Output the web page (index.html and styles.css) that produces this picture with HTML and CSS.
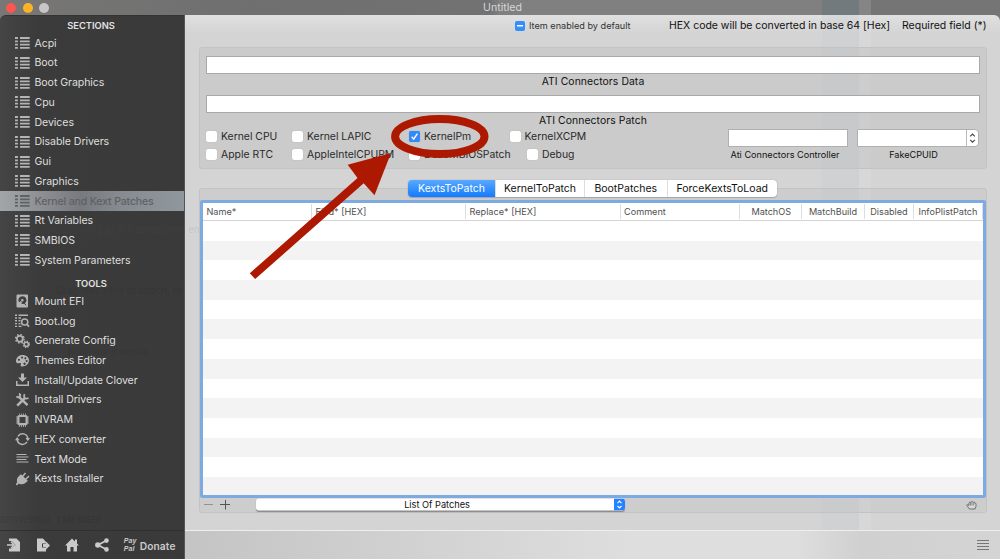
FILE: index.html
```html
<!DOCTYPE html>
<html lang="en">
<head>
<meta charset="utf-8">
<title>Untitled</title>
<link rel="stylesheet" href="styles.css">
</head>
<body>
<svg class="defs" aria-hidden="true">
  <symbol id="list" viewBox="0 0 15 14"><path d="M0 2h2.900M5 2h9.700M0 5.300h2.900M5 5.300h9.700M0 8.600h2.900M5 8.600h9.700M0 11.900h2.900M5 11.900h9.700" stroke="currentColor" stroke-width="1.800"/></symbol>
</svg>
<div class="window">
  <header class="titlebar">
    <div class="lights"><i class="red"></i><i class="amber"></i><i class="grey"></i></div>
    <span class="title">Untitled</span>
  </header>
  <div class="body">
    <aside class="sidebar">
      <h2 class="heading">SECTIONS</h2>
      <nav class="menu">
        <a class="item"><svg class="icon"><use href="#list"/></svg><span>Acpi</span></a>
        <a class="item"><svg class="icon"><use href="#list"/></svg><span>Boot</span></a>
        <a class="item"><svg class="icon"><use href="#list"/></svg><span>Boot Graphics</span></a>
        <a class="item"><svg class="icon"><use href="#list"/></svg><span>Cpu</span></a>
        <a class="item"><svg class="icon"><use href="#list"/></svg><span>Devices</span></a>
        <a class="item"><svg class="icon"><use href="#list"/></svg><span>Disable Drivers</span></a>
        <a class="item"><svg class="icon"><use href="#list"/></svg><span>Gui</span></a>
        <a class="item"><svg class="icon"><use href="#list"/></svg><span>Graphics</span></a>
        <a class="item selected"><svg class="icon"><use href="#list"/></svg><span>Kernel and Kext Patches</span></a>
        <a class="item"><svg class="icon"><use href="#list"/></svg><span>Rt Variables</span></a>
        <a class="item"><svg class="icon"><use href="#list"/></svg><span>SMBIOS</span></a>
        <a class="item"><svg class="icon"><use href="#list"/></svg><span>System Parameters</span></a>
      </nav>
      <h2 class="heading tools">TOOLS</h2>
      <nav class="menu">
        <a class="item"><svg class="icon" viewBox="0 0 15 14"><path fill-rule="evenodd" fill="currentColor" d="M2.500 .5h9.500q1 0 1 1v11q0 1-1 1h-9.500q-1 0-1-1v-11q0-1 1-1zM7.300 2.200a4 4 0 0 0-3.300 6.200l1.700-1.400 1.500 1.800-1 .9a4 4 0 0 0 5-5.300 4 4 0 0 0-3.900-2.200zM7.300 5a1.300 1.300 0 1 1 0 2.600 1.300 1.300 0 0 1 0-2.600z"/><path d="M8.500 8.500l2.500 2.700" stroke="#3a3a3a"/></svg><span>Mount EFI</span></a>
        <a class="item"><svg class="icon" viewBox="0 0 15 14" fill="none" stroke="currentColor"><path d="M0 1.200h2M3.500 1.200H13M0 4h2M3.500 4H6M0 6.800h2M3.500 6.800h2M0 9.600h2M3.500 9.600h2M0 12.400h2M3.500 12.400h3" stroke-width="1.400"/><circle cx="9.700" cy="8" r="3.100" stroke-width="1.500"/><path d="M12 10.300l2 2.500" stroke-width="1.800"/></svg><span>Boot.log</span></a>
        <a class="item"><svg class="icon" viewBox="0 0 15 14" fill="none" stroke="currentColor"><circle cx="4.800" cy="4.800" r="3" stroke-width="1.700"/><circle cx="4.800" cy="4.800" r="4.300" stroke-width="1.300" stroke-dasharray="1.700 1.677"/><circle cx="11.300" cy="10.300" r="2.100" stroke-width="1.500"/><circle cx="11.300" cy="10.300" r="3.200" stroke-width="1.100" stroke-dasharray="1.250 1.263"/></svg><span>Generate Config</span></a>
        <a class="item"><svg class="icon" viewBox="0 0 15 14"><path fill="currentColor" fill-rule="evenodd" d="M7.500 1C11.500 1 14 3.300 14 6.300c0 3.500-3 6.200-7 6.200-1.500 0-1.700-1-1.200-2 .5-1 0-1.800-1.200-1.500-2.200.6-3.600-.1-3.600-1.800C1 3.700 3.800 1 7.500 1zM3.900 4.700a1 1 0 1 0 .1 0zM7 2.400a1 1 0 1 0 .1 0zM10.300 3.300a1 1 0 1 0 .1 0zM11.600 6a1 1 0 1 0 .1 0zM9.500 8.500a1.200 1.200 0 1 0 .1 0z"/></svg><span>Themes Editor</span></a>
        <a class="item"><svg class="icon" viewBox="0 0 15 14"><path fill="currentColor" d="M6 .5h3v4h3L7.500 9 3 4.500h3zM1 8h1.500v3.500h10V8H14v5H1z"/></svg><span>Install/Update Clover</span></a>
        <a class="item"><svg class="icon" viewBox="0 0 15 14" fill="none" stroke="currentColor"><path d="M4 3.800l8.500 8.400" stroke-width="2.400"/><path d="M1.500 3.300q1.800 1.800 3.200 0t-.8-2.600" stroke-width="1.900"/><path d="M2.200 12.700L9.500 5.500" stroke-width="2.500"/><path d="M9.700 1.200q-1.300 2.300 0 3.700t3.800 0" stroke-width="1.700"/></svg><span>Install Drivers</span></a>
        <a class="item"><svg class="icon" viewBox="0 0 15 14" fill="none" stroke="currentColor"><rect x="3.400" y="3" width="8.200" height="8.200" rx="1" stroke-width="2.200"/><path d="M4.500 .5v2M6.500 .5v2M8.500 .5v2M10.500 .5v2M4.500 12v2M6.500 12v2M8.500 12v2M10.500 12v2M1 4h2M1 6h2M1 8h2M1 10h2M12 4h2M12 6h2M12 8h2M12 10h2" stroke-width=".8"/></svg><span>NVRAM</span></a>
        <a class="item"><svg class="icon" viewBox="0 0 15 14"><path d="M3 4.300A5.300 5.300 0 0 1 12.800 6.500M12 9.800A5.300 5.300 0 0 1 2.200 7.600" fill="none" stroke="currentColor" stroke-width="1.500"/><path fill="currentColor" d="M10.500 6H15l-2.200 3.200zM0 8.300h4.500L2.200 5z"/></svg><span>HEX converter</span></a>
        <a class="item"><svg class="icon" viewBox="0 0 15 14"><path d="M1.500 2.500h10M1.500 5h12M1.500 7.500h10M1.500 10h12" stroke="currentColor" stroke-width="1.100"/></svg><span>Text Mode</span></a>
        <a class="item"><svg class="icon" viewBox="0 0 15 14"><path fill="currentColor" d="M4 3.900L6 2.200l6.800 6.600-2 2q-4 2.700-7 .7L2 13.400.7 12.300l1.500-2q-1.200-3.500 1.800-6.400z"/><path d="M7.500 4.500L10.500 1M10.500 7.500L14 4" stroke="currentColor" stroke-width="1.500"/></svg><span>Kexts Installer</span></a>
      </nav>
      <footer class="side-footer">
        <svg class="act" viewBox="0 0 14 14"><path fill="currentColor" d="M2 .5h7.500L13 4v9.500H2v-3h2.500l4-3.500-4-4H2z"/><path d="M0 7h6M4 3.800L7.200 7 4 10.200" stroke="currentColor" stroke-width="1.500" fill="none"/></svg>
        <svg class="act" viewBox="0 0 14 14"><path fill="currentColor" d="M1 .5h6L10 4v1.500H6v4h4v4H1z"/><path fill="currentColor" d="M7 6h3V3.500L14 7.500l-4 4V9H7z"/></svg>
        <svg class="act" viewBox="0 0 14 14"><path fill="currentColor" d="M7 .5l3 3V1.500h2v4L14 7.500h-2v6H8.500V9h-3v4.500H2v-6H0z"/></svg>
        <svg class="act" viewBox="0 0 14 14"><path d="M11.500 2.500L3 7l8.500 4.500" fill="none" stroke="currentColor" stroke-width="1.800"/><g fill="currentColor"><circle cx="11.500" cy="2.600" r="2.300"/><circle cx="2.800" cy="7" r="2.700"/><circle cx="11.500" cy="11.400" r="2.300"/></g></svg>
        <span class="paypal">Pay<br>Pal</span><span class="donate">Donate</span>
      </footer>
    </aside>
    <main class="main">
      <div class="legend"><i class="mixed"></i><span class="l1">Item enabled by default</span><span class="l2">HEX code will be converted in base 64 [Hex]</span><span class="l3">Required field (*)</span></div>
      <section class="panel">
        <div class="field"></div>
        <div class="caption data">ATI Connectors Data</div>
        <div class="field second"></div>
        <div class="caption patch">ATI Connectors Patch</div>
        <div class="options">
          <div class="checks">
            <label class="check"><i></i><span>Kernel CPU</span></label>
            <label class="check"><i></i><span>Kernel LAPIC</span></label>
            <label class="check"><i class="on"><svg viewBox="0 0 11 11"><path d="M2.700 5.800l2 2.400L8.400 2.700" fill="none" stroke="#fff" stroke-width="1.400"/></svg></i><span>KernelPm</span></label>
            <label class="check"><i></i><span>KernelXCPM</span></label>
            <label class="check"><i></i><span>Apple RTC</span></label>
            <label class="check"><i></i><span>AppleIntelCPUPM</span></label>
            <label class="check"><i></i><span>DellSMBIOSPatch</span></label>
            <label class="check debug"><i></i><span>Debug</span></label>
          </div>
          <div class="mini ctl"><div class="box"></div><span>Ati Connectors Controller</span></div>
          <div class="mini cpu"><div class="box combo"><svg viewBox="0 0 12 17"><path d="M3.500 6.700L6 4.300l2.500 2.400M3.500 10.600L6 13l2.500-2.400" fill="none" stroke="#444" stroke-width="1.300"/></svg></div><span>FakeCPUID</span></div>
        </div>
      </section>
      <div class="tabs"><span class="tab active">KextsToPatch</span><span class="tab">KernelToPatch</span><span class="tab">BootPatches</span><span class="tab">ForceKextsToLoad</span></div>
      <section class="patches">
        <div class="table">
          <div class="thead"><span>Name*</span><span>Find* [HEX]</span><span>Replace* [HEX]</span><span>Comment</span><span>MatchOS</span><span>MatchBuild</span><span>Disabled</span><span>InfoPlistPatch</span></div>
          <div class="rows"></div>
        </div>
        <div class="tablebar">
          <svg class="pm" viewBox="0 0 28 11"><path d="M1 4.500h9" stroke="#929292"/><path d="M17 4.500h10M22.500 0v9.500" stroke="#555"/></svg>
          <div class="select"><span>List Of Patches</span><i><svg viewBox="0 0 11 12"><path d="M3.500 4.600l2-2 2 2M3.500 7.500l2 2 2-2" fill="none" stroke="#fff" stroke-width="1.100"/></svg></i></div>
          <svg class="hand" viewBox="0 0 12 10"><path d="M3.500 9L.8 5.500q-.2-1.200 1-.8L3 5.500V2.800q.6-1 1.300 0 .4-1.700 1.500-.7 1-1.200 1.500.3 1.300-.8 1.400.7 1.400-.5 1.300 1.400v1.800L9 9z" fill="#d8d8d8" stroke="#666" stroke-width=".9"/><path d="M4.500 3v2.500M6 2.500v3M7.700 3v2.500" stroke="#777" stroke-width=".8"/></svg>
        </div>
      </section>
      <footer class="bottom"><svg viewBox="0 0 12 10"><path d="M0 .5h12M0 3.500h12M0 6.500h12M0 9.500h12" stroke="#777"/></svg></footer>
    </main>
  </div>
  <div class="ghost g1">aja abre el config.plist y selecciona en</div>
  <div class="ghost g2">Drag files here to attach, or</div>
  <div class="ghost g3">Notify me of replies</div>
  <div class="ghost g4">BROWSING &nbsp; 1 MEMBER</div>
  <svg class="mark" viewBox="0 0 1000 559"><g fill="#ad1900"><path d="M249.800 273.300L357.500 178l-9.800-13.300L391 153l-16.500 42.300L363.700 183.200 255.200 279z"/></g><ellipse cx="439.800" cy="136.500" rx="44.700" ry="17.500" fill="none" stroke="#ad1900" stroke-width="8"/></svg>
</div>
</body>
</html>
```
FILE: styles.css
```css
* { box-sizing: border-box; }
body { margin: 0; font-family: Inter, "Liberation Sans", sans-serif; font-size: 11px; color: #111; }
.defs { display: none; }
.window { position: relative; width: 1000px; height: 559px; overflow: hidden; display: flex; flex-direction: column; background: #767676; }
.titlebar { height: 15px; flex: none; display: grid; grid-template-columns: 1fr auto 1fr; align-items: center; background: linear-gradient(90deg, transparent 822px, #737a7e 822px 859px, #858585 859px 871px, #757575 871px), linear-gradient(90deg, #787776, #6f6f6f 25%, #727272 49%, #808080 50%); }
.lights { display: flex; gap: 6.500px; padding-left: 6px; }
.lights i { width: 10px; height: 10px; border-radius: 50%; }
.red { background: #fc5650; }
.amber { background: #fdb324; }
.grey { background: #c6c6c6; }
.title { grid-column: 2; color: #d6d6d6; font-size: 10.600px; letter-spacing: 0; transform: translateX(2.500px); }
.body { flex: 1; display: flex; min-height: 0; }
.sidebar { width: 185px; flex: none; background: linear-gradient(90deg, #454545 0, #3b3b3b 38px, #3a3a3a); border-top: 1px solid #333; border-right: 1px solid #555; border-top-left-radius: 6px; color: #dedede; display: flex; flex-direction: column; }
.heading { margin: 0; height: 17.400px; padding: 2px 2px 0 0; font-size: 9.300px; line-height: 15px; font-weight: 600; text-align: center; color: #e3e3e3; }
.tools { height: 21.500px; padding-top: 6px; }
.menu { display: flex; flex-direction: column; }
.item { height: 19.720px; display: flex; align-items: center; gap: 4.500px; padding-left: 15px; font-size: 10.600px; letter-spacing: -.08px; white-space: nowrap; }
.icon { width: 15px; height: 14px; flex: none; color: #b4b4b4; }
.selected { background: linear-gradient(90deg, #a3a6a8 0, #92969a 30px, #777b7f 80px, #858b90 120px, #90979d); color: #606163; font-weight: 500; letter-spacing: -.18px; }
.selected .icon { color: #5f6265; }
.side-footer { margin-top: auto; height: 29px; border-top: 1px solid #303030; display: flex; align-items: center; padding: 0 0 0 7px; color: #cacaca; }
.act { width: 14px; height: 14px; margin-right: 15.200px; }
.paypal { font: italic bold 7px/8px "Liberation Sans", sans-serif; letter-spacing: .1px; margin-right: 3px; width: 13px; }
.donate { font-size: 10.200px; font-weight: 600; letter-spacing: .1px; padding-top: 2px; }
.main { flex: 1; min-width: 0; border-top-right-radius: 6px; display: flex; flex-direction: column; background: linear-gradient(90deg, transparent 637px, rgba(195,202,208,.3) 637px 674px, rgba(220,220,220,.45) 674px 686px, transparent 686px), linear-gradient(#e0e0e0, transparent 18px), #d4d4d4; }
.legend { height: 32px; flex: none; display: flex; align-items: center; padding: 0 0 11px 330px; white-space: nowrap; }
.mixed { width: 10px; height: 10px; border-radius: 2px; background: linear-gradient(#fff, #fff) center/6px 1.500px no-repeat, #338dfb; margin-right: 4px; }
.l1 { font-size: 9.150px; width: 140px; color: #333; }
.l2 { font-size: 10.500px; letter-spacing: -.02px; width: 233px; }
.l3 { font-size: 10.500px; }
.panel { height: 122px; flex: none; margin: 0 13px 0 14px; border: 1px solid #c3c3c3; border-radius: 3px; background: rgba(185,185,185,.35); padding: 8px 6px 0; }
.field { height: 18px; background: #fff; border: 1px solid #a9a9a9; }
.caption { text-align: center; font-size: 10.400px; letter-spacing: .07px; }
.data { height: 20.500px; line-height: 16px; }
.patch { height: 14.500px; line-height: 15px; }
.options { display: flex; align-items: flex-start; }
.checks { width: 522px; flex: none; display: grid; grid-template: 18.500px 18.500px / 86px 117px 100.500px 1fr; }
.check { display: flex; align-items: center; gap: 4px; font-size: 10.400px; white-space: nowrap; color: #2a2a2a; height: 18px; }
.check i { width: 11px; height: 11px; flex: none; border-radius: 2px; background: #fff; box-shadow: 0 0 1px #999; }
.check i.on { background: #318afa; }
.check svg { display: block; width: 11px; height: 11px; }
.debug { padding-left: 17.500px; }
.mini { text-align: center; font-size: 9.150px; padding-top: 2px; white-space: nowrap; }
.ctl { width: 120px; }
.cpu { width: 122px; margin-left: 9px; }
.box { height: 18px; border: 1px solid #b0b0b0; background: #fff; margin-bottom: 1.500px; }
.ctl span { padding-right: 6px; }
.cpu span { padding-right: 9px; }
.combo { border-radius: 0 4px 4px 0; }
.combo svg { display: block; width: 12px; height: 16px; margin-left: auto; border-left: 1px solid #bbb; }
.tabs { position: relative; z-index: 1; width: 369px; height: 17px; flex: none; margin: 11px 0 -9px 223px; display: grid; grid-template-columns: 87px 89px 82.500px 1fr; border-radius: 4px; background: #fff; box-shadow: 0 0 1px #888, 0 1px 1px #aaa; overflow: hidden; }
.tab { text-align: center; line-height: 17px; font-size: 10.500px; border-left: 1px solid #ddd; white-space: nowrap; }
.active { color: #fff; background: linear-gradient(#58a9ff, #147aff); border: 0; }
.patches { height: 325px; flex: none; margin: 0 13px 0 14px; border: 1px solid #c3c3c3; border-radius: 3px; background: rgba(190,190,190,.3); padding-top: 11px; }
.table { height: 298px; border: 3px solid #7eaae2; border-radius: 2px; background: #fff; }
.thead { height: 18px; display: grid; grid-template-columns: 109px 154px 154.500px 119px 62.500px 63px 49px 1fr; align-items: center; font-size: 9.150px; color: #505050; border-bottom: 1px solid #d4d4d4; }
.thead span { height: 15px; line-height: 15px; padding-left: 3.500px; border-right: 1px solid #ddd; white-space: nowrap; }
.thead span:nth-child(n+5) { text-align: center; padding: 0; }
.thead span:nth-child(5) { padding-left: 2px; }
.rows { height: 274px; background: repeating-linear-gradient(#fff 0 19.700px, #f3f3f3 19.700px 39.400px); }
.tablebar { height: 14px; display: flex; align-items: center; }
.pm { width: 28px; height: 11px; margin-left: 3px; }
.select { width: 369px; height: 12px; margin-left: 24.500px; display: flex; background: #fff; border-radius: 3px; overflow: hidden; box-shadow: 0 1px 1px #888; font-size: 9.200px; line-height: 11px; transform: translateY(-.5px); }
.select span { flex: 1; text-align: center; padding-left: 5px; }
.select i { width: 11px; background: #2382ff; }
.select svg { width: 11px; height: 12px; display: block; }
.hand { width: 12px; height: 10px; margin-left: auto; margin-right: 8px; }
.bottom { margin-top: auto; height: 29px; border-top: 1px solid #eee; display: flex; align-items: center; justify-content: flex-end; padding-right: 11px; background: linear-gradient(90deg, #c4c4c4, #dedede 55%, #dedede 75%, #d0d0d0 83%, #d4d4d4); }
.bottom svg { width: 12px; height: 10px; }
.ghost { position: absolute; pointer-events: none; white-space: nowrap; color: rgba(20,20,20,.12); font-size: 10.200px; }
.g1 { left: 23px; top: 224px; font-size: 9.800px; color: rgba(90,90,90,.14); }
.g2 { left: 56px; top: 285px; font-size: 9.800px; }
.g3 { left: 68px; top: 347px; font-size: 8.600px; }
.g4 { left: 0; top: 514px; font-size: 9px; font-weight: 600; }
.mark { position: absolute; z-index: 3; left: 0; top: 0; width: 1000px; height: 559px; pointer-events: none; }
```
